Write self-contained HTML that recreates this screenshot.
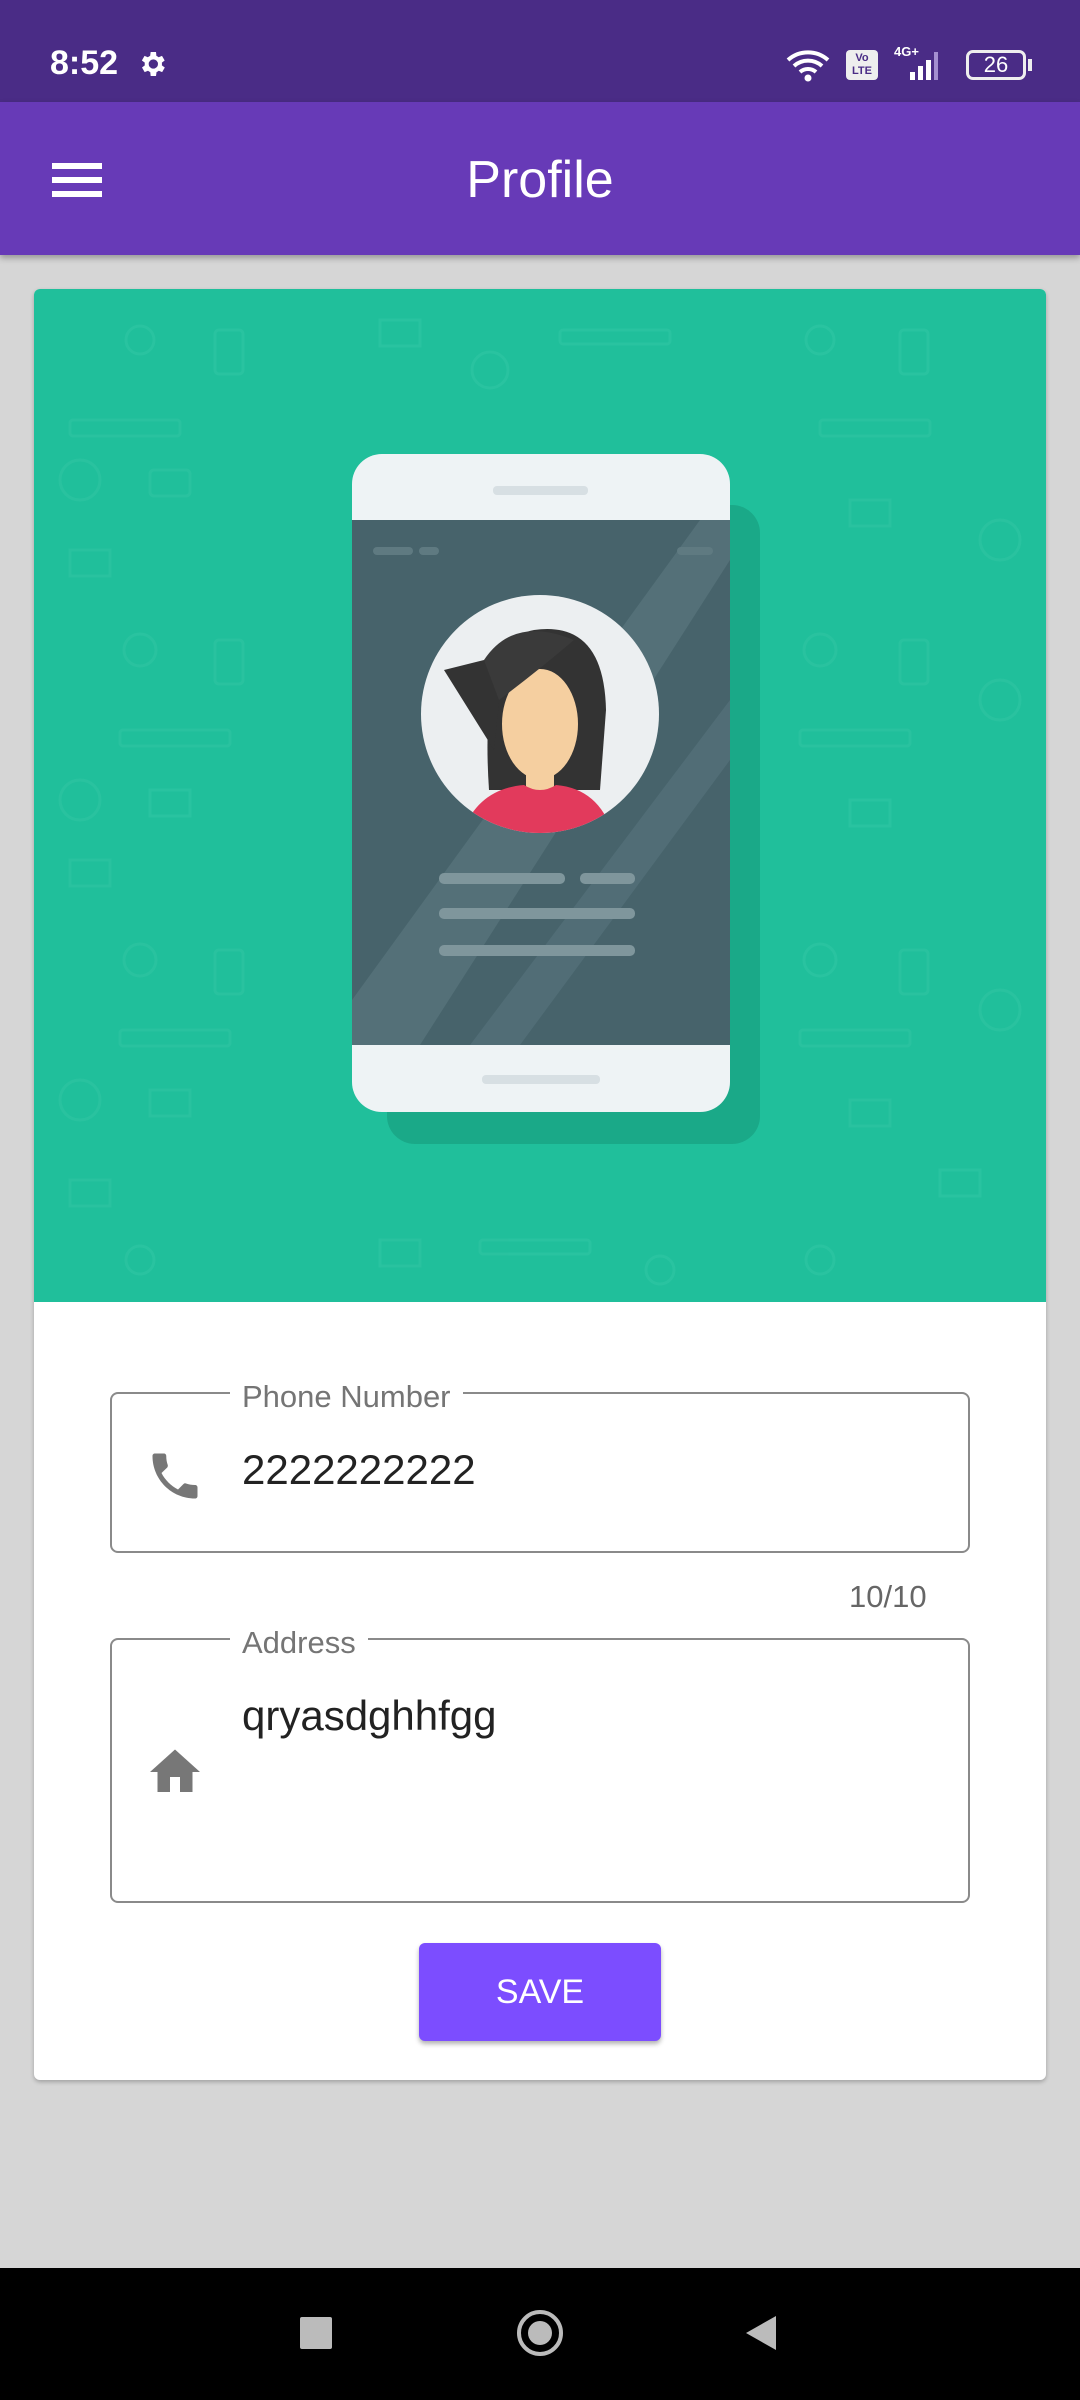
<!DOCTYPE html>
<html><head><meta charset="utf-8"><style>
*{margin:0;padding:0;box-sizing:border-box}
body{width:1080px;height:2400px;background:#d6d6d6;font-family:"Liberation Sans",sans-serif;position:relative;overflow:hidden}
.abs{position:absolute}
.status{left:0;top:0;width:1080px;height:102px;background:#4a2c86;color:#fff}
.appbar{left:0;top:102px;width:1080px;height:153px;background:#673ab7;box-shadow:0 3px 6px rgba(0,0,0,.3)}
.card{left:34px;top:289px;width:1012px;height:1791px;background:#fff;border-radius:6px;box-shadow:0 2px 4px rgba(0,0,0,.25);overflow:hidden}
.hero{left:0;top:0;width:1012px;height:1013px;background:#20bf9b}
.field{border:2px solid #8a8a8a;border-radius:8px}
.lbl{background:#fff;padding:0 12px;color:#757575;font-size:31px}
.val{color:#222;font-size:42px}
.nav{left:0;top:2268px;width:1080px;height:132px;background:#000}
</style></head><body>
<div class="abs status">
 <div class="abs" style="left:50px;top:44px;font-size:34px;font-weight:bold">8:52</div>
 <svg class="abs" style="left:136px;top:48px" width="32" height="32" viewBox="0 0 24 24"><path fill="#fff" d="M19.4 13a7.5 7.5 0 000-2l2.1-1.6-2-3.5-2.5 1a7 7 0 00-1.7-1L15 3h-4l-.4 2.9a7 7 0 00-1.7 1l-2.5-1-2 3.5L6.6 11a7.5 7.5 0 000 2l-2.1 1.6 2 3.5 2.5-1a7 7 0 001.7 1L11 21h4l.4-2.9a7 7 0 001.7-1l2.5 1 2-3.5zM13 15.5a3.5 3.5 0 110-7 3.5 3.5 0 010 7z"/></svg>
 <svg class="abs" style="left:786px;top:48px" width="46" height="34" viewBox="0 0 46 34"><path d="M2 12a30 30 0 0140 0M8 18a21 21 0 0128 0M14 24a12 12 0 0116 0" stroke="#fff" stroke-width="4" fill="none"/><circle cx="22" cy="30" r="3.5" fill="#fff"/></svg>
 <div class="abs" style="left:846px;top:50px;width:32px;height:30px;background:#eee;border-radius:4px;color:#4a2c86;font-size:11px;font-weight:bold;text-align:center;line-height:13px;padding-top:2px">Vo<br>LTE</div>
 <div class="abs" style="left:894px;top:44px;font-size:13px;font-weight:bold">4G+</div>
 <svg class="abs" style="left:896px;top:48px" width="56" height="34" viewBox="0 0 56 34"><rect x="14" y="24" width="5" height="8" fill="#fff"/><rect x="22" y="18" width="5" height="14" fill="#fff"/><rect x="30" y="12" width="5" height="20" fill="#fff"/><rect x="38" y="4" width="4" height="28" fill="#a48fd0"/></svg>
 <div class="abs" style="left:966px;top:50px;width:60px;height:30px;border:3px solid #eee;border-radius:7px;font-size:22px;text-align:center;line-height:24px">26</div>
 <div class="abs" style="left:1028px;top:59px;width:4px;height:12px;background:#eee"></div>
</div>
<div class="abs appbar">
 <div class="abs" style="left:52px;top:61px;width:50px;height:6px;background:#fff"></div>
 <div class="abs" style="left:52px;top:75px;width:50px;height:6px;background:#fff"></div>
 <div class="abs" style="left:52px;top:89px;width:50px;height:6px;background:#fff"></div>
 <div class="abs" style="left:0;width:1080px;top:48px;text-align:center;color:#fff;font-size:52px">Profile</div>
</div>
<div class="abs card">
 <div class="abs hero">
  <svg width="1012" height="1013" viewBox="34 289 1012 1013">
   <g fill="none" stroke="#3ccaa8" stroke-width="3" opacity=".35">
    <circle cx="140" cy="340" r="14"/><rect x="215" y="330" width="28" height="44" rx="4"/><rect x="70" y="420" width="110" height="16" rx="3"/><circle cx="80" cy="480" r="20"/><rect x="150" y="470" width="40" height="26" rx="4"/><rect x="70" y="550" width="40" height="26"/><circle cx="140" cy="650" r="16"/><rect x="215" y="640" width="28" height="44" rx="4"/><rect x="120" y="730" width="110" height="16" rx="3"/><circle cx="80" cy="800" r="20"/><rect x="150" y="790" width="40" height="26"/><rect x="70" y="860" width="40" height="26"/><circle cx="140" cy="960" r="16"/><rect x="215" y="950" width="28" height="44" rx="4"/><rect x="120" y="1030" width="110" height="16" rx="3"/><circle cx="80" cy="1100" r="20"/><rect x="150" y="1090" width="40" height="26"/><rect x="70" y="1180" width="40" height="26"/><circle cx="140" cy="1260" r="14"/>
    <circle cx="820" cy="340" r="14"/><rect x="900" y="330" width="28" height="44" rx="4"/><rect x="820" y="420" width="110" height="16" rx="3"/><circle cx="1000" cy="540" r="20"/><rect x="850" y="500" width="40" height="26"/><circle cx="820" cy="650" r="16"/><rect x="900" y="640" width="28" height="44" rx="4"/><rect x="800" y="730" width="110" height="16" rx="3"/><circle cx="1000" cy="700" r="20"/><rect x="850" y="800" width="40" height="26"/><circle cx="820" cy="960" r="16"/><rect x="900" y="950" width="28" height="44" rx="4"/><rect x="800" y="1030" width="110" height="16" rx="3"/><circle cx="1000" cy="1010" r="20"/><rect x="850" y="1100" width="40" height="26"/><rect x="940" y="1170" width="40" height="26"/><circle cx="820" cy="1260" r="14"/>
    <rect x="380" y="320" width="40" height="26"/><circle cx="490" cy="370" r="18"/><rect x="560" y="330" width="110" height="14" rx="3"/><rect x="380" y="1240" width="40" height="26"/><rect x="480" y="1240" width="110" height="14" rx="3"/><circle cx="660" cy="1270" r="14"/>
   </g>
   <rect x="387" y="505" width="373" height="639" rx="28" fill="#1aa585" opacity=".85"/>
   <rect x="352" y="454" width="378" height="658" rx="30" fill="#eef3f5"/>
   <rect x="352" y="520" width="378" height="525" fill="#47636b"/>
   <polygon points="352,1000 700,520 730,520 730,560 420,1045 352,1045" fill="#5a767d" opacity=".7"/>
   <polygon points="470,1045 730,700 730,760 520,1045" fill="#55727a" opacity=".7"/>
   <rect x="493" y="486" width="95" height="9" rx="4" fill="#d7dfe3"/>
   <rect x="482" y="1075" width="118" height="9" rx="4" fill="#d7dfe3"/>
   <rect x="373" y="547" width="40" height="8" rx="4" fill="#5f7a81"/><rect x="419" y="547" width="20" height="8" rx="4" fill="#5f7a81"/><rect x="677" y="547" width="36" height="8" rx="4" fill="#5f7a81"/>
   <clipPath id="c"><circle cx="540" cy="714" r="119"/></clipPath>
   <circle cx="540" cy="714" r="119" fill="#eceff1"/>
   <g clip-path="url(#c)">
    <g transform="translate(-6,50) scale(1.0)">
     <path d="M495 740 Q485 590 540 580 Q610 570 612 660 L606 740 Z" fill="#333"/>
     <polygon points="450,620 510,605 500,700" fill="#333"/>
     <ellipse cx="546" cy="674" rx="38" ry="55" fill="#f5cfa0"/>
     <path d="M490 610 Q520 565 580 590 Q545 620 505 650 Z" fill="#3a3a3a"/>
     <rect x="532" y="710" width="28" height="30" fill="#f5cfa0"/>
     <path d="M460 820 Q468 740 530 735 Q546 745 562 735 Q620 740 625 820 Z" fill="#e23a5c"/>
    </g>
   </g>
   <rect x="439" y="873" width="126" height="11" rx="5" fill="#7f969c"/><rect x="580" y="873" width="55" height="11" rx="5" fill="#7f969c"/>
   <rect x="439" y="908" width="196" height="11" rx="5" fill="#7f969c"/>
   <rect x="439" y="945" width="196" height="11" rx="5" fill="#7f969c"/>
  </svg>
 </div>
</div>
<div class="abs field" style="left:110px;top:1392px;width:860px;height:161px"></div>
<div class="abs lbl" style="left:230px;top:1379px">Phone Number</div>
<svg class="abs" style="left:145px;top:1446px" width="60" height="60" viewBox="0 0 24 24"><path fill="#777" d="M6.6 10.8c1.4 2.8 3.8 5.1 6.6 6.6l2.2-2.2c.3-.3.7-.4 1-.2 1.1.4 2.3.6 3.6.6.6 0 1 .4 1 1V20c0 .6-.4 1-1 1C10.6 21 3 13.4 3 4c0-.6.4-1 1-1h3.5c.6 0 1 .4 1 1 0 1.3.2 2.5.6 3.6.1.3 0 .7-.2 1z"/></svg>
<div class="abs val" style="left:242px;top:1446px">2222222222</div>
<div class="abs" style="left:849px;top:1579px;font-size:31px;color:#666">10/10</div>
<div class="abs field" style="left:110px;top:1638px;width:860px;height:265px"></div>
<div class="abs lbl" style="left:230px;top:1625px">Address</div>
<svg class="abs" style="left:145px;top:1742px" width="60" height="60" viewBox="0 0 24 24"><path fill="#777" d="M10 20v-6h4v6h5v-8h3L12 3 2 12h3v8z"/></svg>
<div class="abs val" style="left:242px;top:1692px">qryasdghhfgg</div>
<div class="abs" style="left:419px;top:1943px;width:242px;height:98px;background:#7c4dff;border-radius:6px;box-shadow:0 3px 5px rgba(0,0,0,.3);color:#fff;font-size:34px;text-align:center;line-height:98px">SAVE</div>
<div class="abs nav">
 <div class="abs" style="left:300px;top:49px;width:32px;height:32px;background:#bbb;border-radius:2px"></div>
 <div class="abs" style="left:517px;top:42px;width:46px;height:46px;border:4px solid #bbb;border-radius:50%"></div>
 <div class="abs" style="left:528px;top:53px;width:24px;height:24px;background:#bbb;border-radius:50%"></div>
 <svg class="abs" style="left:742px;top:46px" width="36" height="38" viewBox="0 0 36 38"><path d="M34 2v34L4 19z" fill="#bbb"/></svg>
</div>
</body></html>
